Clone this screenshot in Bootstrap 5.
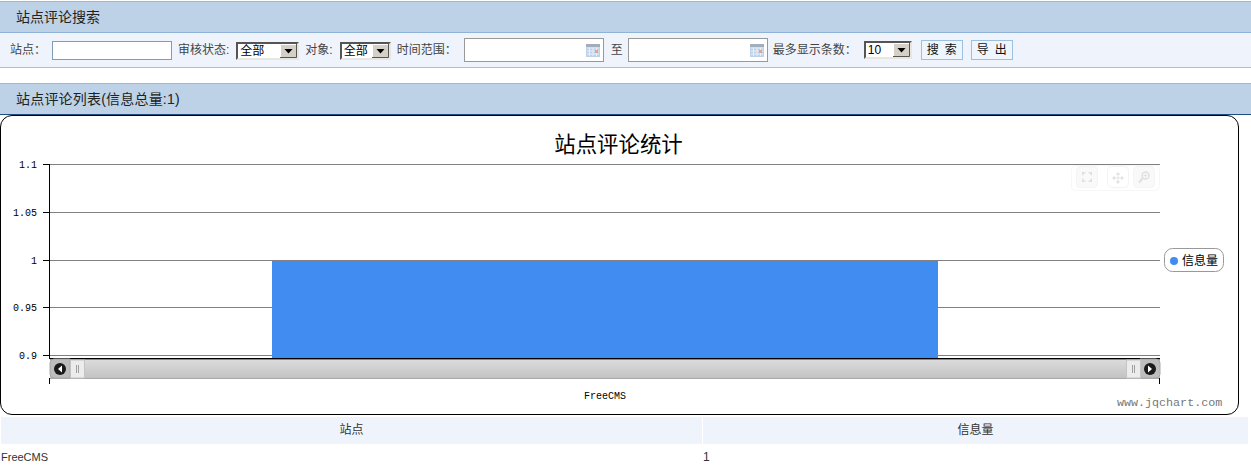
<!DOCTYPE html>
<html lang="zh-CN"><head><meta charset="utf-8"><title>站点评论</title>
<link rel="stylesheet" href="https://cdn.jsdelivr.net/npm/bootstrap@5.3.0/dist/css/bootstrap.min.css">
<style>
html,body{margin:0;background:#fff;overflow:hidden}
body{font:12px/1.2 "Liberation Sans","Noto Sans CJK SC",sans-serif;color:#333;height:468px}
.bar-title{margin-top:1px;height:32px;background:#bdd2e7;border-top:1px solid #9db9d6;border-bottom:1px solid #8fb3d8;font-size:14px;color:#222;padding-left:16px}
.bar-two{margin-top:15px;height:32px;border-bottom:1px solid #1f4e80;letter-spacing:.2px}
.filter-row{height:35px;background:#eff4fc;border-bottom:1px solid #a3c0de;padding-left:10px;color:#444}
.filter-row>*{flex:none}
.filter-row>span{padding-top:1px}
.txt-in{width:120px;height:19px;border:1px solid #7f9db9;background:#fff;margin-left:6px;padding:0;border-radius:0}
.date-wrap{width:140px;height:24px;border:1px solid #999;background:#fff}
.date-wrap input{width:100%;height:100%;border:0;background:transparent;padding:0;outline:0}
.date-wrap svg{position:absolute;right:3px;top:5px}
.w1{margin-left:6px}.w2{margin-left:7px;margin-top:1px}.w3{margin-left:6px}.w4{margin-left:7px}.w5{margin-left:7px}.w6{margin-left:5px}.w7{margin-left:5px}.w8{margin-left:7px}.w9{margin-left:9px}.w10{margin-left:8px}
.pick{appearance:none;-webkit-appearance:none;height:18px;padding:0 0 0 2px;font:12px/14px "Liberation Sans","Noto Sans CJK SC",sans-serif;color:#000;border:2px solid;border-color:#555 #e8e6e0 #e8e6e0 #555;outline:0;border-radius:0;background-color:#fff;
background-image:url("data:image/svg+xml,%3Csvg xmlns='http://www.w3.org/2000/svg' width='17' height='14'%3E%3Crect width='17' height='14' fill='%23d4d0c8'/%3E%3Cpath d='M.5 13.500V.5H16.500' stroke='%23fff' fill='none'/%3E%3Cpath d='M0 13.500H16.500V0' stroke='%23555' fill='none'/%3E%3Cpath d='M4.500 5h8l-4 4.500z' fill='%23000'/%3E%3C/svg%3E");background-repeat:no-repeat;background-position:right 0 top 0}
.act-btn{height:20px;width:42px;padding:0 0 0 5px;border:1px solid #9cc0e0;background:#eef5fc;color:#111;font-size:12px;line-height:18px;border-radius:0;letter-spacing:6px;text-align:left;white-space:nowrap;--bs-btn-hover-bg:#eef5fc}
.chart-box{height:300px;width:1239px;border:1px solid #000;border-radius:12px;overflow:hidden;background:#fff}
.chart-box svg{display:block}
.data-grid{width:1248px;margin:2px 0 0 1px;border-collapse:separate;border-spacing:0;table-layout:fixed}
.data-grid th{height:27px;background:#eff4fc;font-weight:400;text-align:center;color:#333;padding:0;border-right:1px solid #fff}
.data-grid td{height:24px;padding:3px 0 0;color:#333;border:0}
.data-grid td:first-child{font-size:11px}
</style></head><body>
<div class="bar-title d-flex align-items-center">站点评论搜索</div>
<div class="filter-row d-flex align-items-center">
<span>站点：</span><input class="txt-in" type="text" aria-label="站点">
<span class="w1">审核状态:</span><select class="pick w2" style="width:63px" aria-label="审核状态"><option>全部</option></select>
<span class="w3">对象:</span><select class="pick w2" style="width:51px" aria-label="对象"><option>全部</option></select>
<span class="w3">时间范围：</span>
<div class="date-wrap position-relative w4"><input type="text" aria-label="开始"><svg width="14" height="13" viewBox="0 0 14 13"><rect width="14" height="13" fill="#bdd2ea"/><rect width="14" height="3" fill="#a3aebd"/><path d="M1 4h12M1 7h12M1 10h12M3.500 4v8M7 4v8M10.500 4v8" stroke="#e8eef6"/><rect x="9" y="6" width="3" height="3" fill="#e8a090"/></svg></div>
<span class="w5">至</span>
<div class="date-wrap position-relative w6"><input type="text" aria-label="结束"><svg width="14" height="13" viewBox="0 0 14 13"><rect width="14" height="13" fill="#bdd2ea"/><rect width="14" height="3" fill="#a3aebd"/><path d="M1 4h12M1 7h12M1 10h12M3.500 4v8M7 4v8M10.500 4v8" stroke="#e8eef6"/><rect x="9" y="6" width="3" height="3" fill="#e8a090"/></svg></div>
<span class="w7">最多显示条数：</span><select class="pick w8" style="width:48px" aria-label="条数"><option>10</option></select>
<button class="btn act-btn w9" type="button">搜索</button><button class="btn act-btn w10" type="button">导出</button>
</div>
<div class="bar-title bar-two d-flex align-items-center">站点评论列表(信息总量:1)</div>
<div class="chart-box">
<svg width="1237" height="298" viewBox="1 116 1237 298" xmlns="http://www.w3.org/2000/svg">
<defs><linearGradient id="trk" x1="0" y1="0" x2="0" y2="1"><stop offset="0" stop-color="#dcdcdc"/><stop offset="1" stop-color="#c2c2c2"/></linearGradient></defs>
<text x="618.500" y="152" text-anchor="middle" font-size="21.400" fill="#000" font-family="'Noto Sans CJK SC',sans-serif">站点评论统计</text>
<g stroke="#808080" shape-rendering="crispEdges"><path d="M49 164.500H1160M49 212.500H1160M49 260.500H1160M49 307.500H1160M49 355.500H1160"/></g>
<rect x="272" y="261" width="666" height="97" fill="#418cf0"/>
<g stroke="#000" shape-rendering="crispEdges"><path d="M49.500 164V358M43 164.500H49M43 212.500H49M43 260.500H49M43 307.500H49M43 355.500H49M49 358.500H1160"/></g>
<g font-family="'Liberation Mono',monospace" font-size="10" fill="#000" text-anchor="end"><text x="37" y="168">1.1</text><text x="37" y="216">1.05</text><text x="37" y="264">1</text><text x="37" y="311">0.95</text><text x="37" y="359">0.9</text></g>
<rect x="50" y="359.500" width="1110" height="19" fill="url(#trk)"/>
<path d="M50 378.500H1160" stroke="#a8a8a8" shape-rendering="crispEdges"/><path d="M50 359.500H1160" stroke="#888" shape-rendering="crispEdges"/>
<path d="M70 359h-16q-4 0-4 4v11q0 4 4 4h16z" fill="#bdbdbd" stroke="#a8a8a8"/>
<rect x="70.500" y="360" width="14" height="18" fill="#ececec" stroke="#c4c4c4"/>
<path d="M76.500 365v8M78.500 365v8" stroke="#a0a0a0" shape-rendering="crispEdges"/>
<circle cx="60" cy="369" r="6" fill="#1a1a1a"/><path d="M62 365.500v7l-4-3.500z" fill="#fff"/>
<path d="M1140 359h16q4 0 4 4v11q0 4-4 4h-16z" fill="#bdbdbd" stroke="#a8a8a8"/>
<rect x="1126.500" y="360" width="14" height="18" fill="#ececec" stroke="#c4c4c4"/>
<path d="M1132.500 365v8M1134.500 365v8" stroke="#a0a0a0" shape-rendering="crispEdges"/>
<circle cx="1150" cy="369" r="6" fill="#1a1a1a"/><path d="M1148 365.500v7l4-3.500z" fill="#fff"/>
<path d="M49.500 378v6M1159.500 378v6" stroke="#000" shape-rendering="crispEdges"/>
<text x="605" y="399" text-anchor="middle" font-family="'Liberation Mono',monospace" font-size="10" fill="#000">FreeCMS</text>
<text x="1117" y="406" font-family="'Liberation Mono',monospace" font-size="11.700" fill="#777">www.jqchart.com</text>
<g opacity=".6">
<rect x="1071.500" y="165.500" width="88" height="25" rx="4" fill="#fff" stroke="#f2f2f2"/>
<rect x="1076.500" y="166.500" width="21" height="21" rx="4" fill="#f6f6f6" stroke="#eee"/>
<rect x="1107.500" y="166.500" width="21" height="21" rx="4" fill="#fff" stroke="#eee"/>
<rect x="1133.500" y="166.500" width="21" height="21" rx="4" fill="#f6f6f6" stroke="#eee"/>
<path d="M1082 172h4l-4 4zM1092 172h-4l4 4zM1082 182h4l-4-4zM1092 182h-4l4-4z" fill="#ccc"/>
<path d="M1118 173v10M1113 178h10M1116.500 174.500h3l-1.500-2zM1116.500 181.500h3l-1.500 2zM1114.500 176.500v3l-2-1.500zM1121.500 176.500v3l2-1.500z" stroke="#ccc" fill="#ccc" stroke-width=".8"/>
<circle cx="1145.500" cy="175.500" r="3.500" fill="none" stroke="#ccc" stroke-width="1.500"/><path d="M1142.500 178.500l-3.500 4" stroke="#ccc" stroke-width="2"/><path d="M1143.500 175.500h4M1145.500 173.500v4" stroke="#ccc" stroke-width=".8"/>
</g>
<rect x="1164.500" y="248.500" width="59" height="23" rx="8" fill="#fff" stroke="#999"/>
<circle cx="1174" cy="261" r="4" fill="#418cf0"/>
<text x="1182" y="265" font-size="12" fill="#000" font-family="'Noto Sans CJK SC',sans-serif">信息量</text>
</svg>
</div>
<table class="data-grid"><colgroup><col style="width:702px"><col></colgroup>
<thead><tr><th scope="col">站点</th><th scope="col">信息量</th></tr></thead>
<tbody><tr><td>FreeCMS</td><td>1</td></tr></tbody></table>
</body></html>
